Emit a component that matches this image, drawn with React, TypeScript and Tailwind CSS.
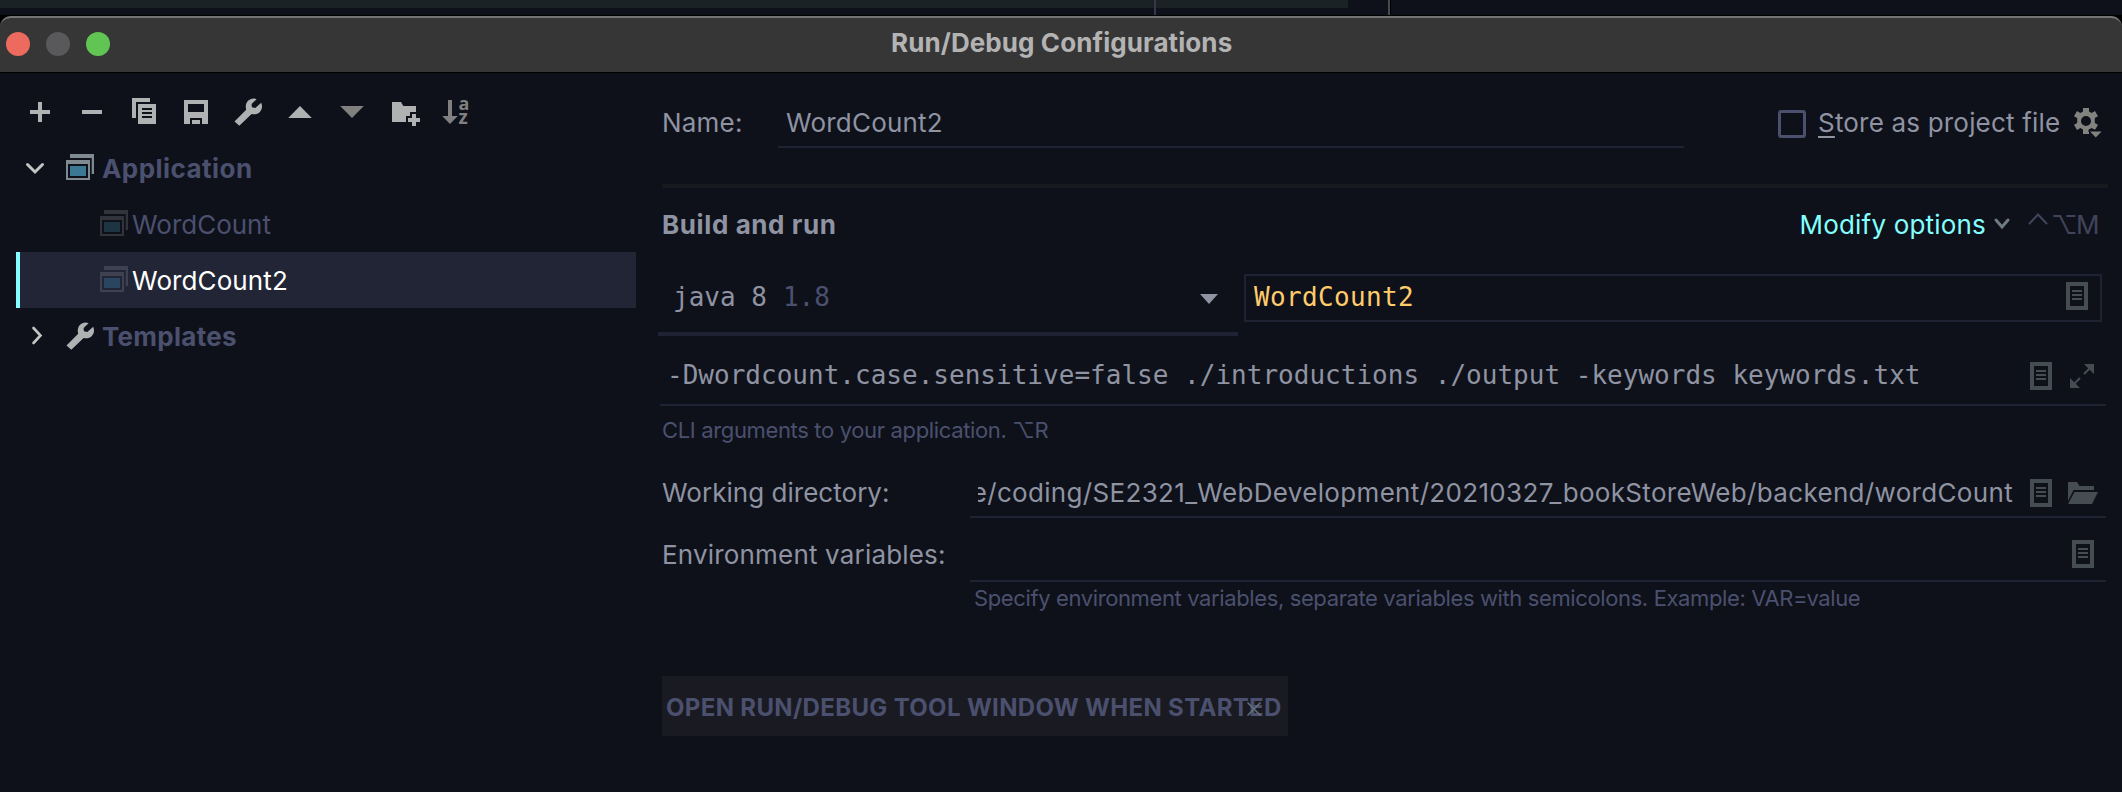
import type { ReactNode } from 'react'

function Svg({ children, className = 'size-8', box = '0 0 32 32' }: { children: ReactNode; className?: string; box?: string }) {
  return (
    <svg viewBox={box} className={`shrink-0 overflow-visible ${className}`} fill="currentColor" aria-hidden="true">
      {children}
    </svg>
  )
}

const PlusIcon = () => (
  <Svg><path d="M14 6h4v8h8v4h-8v8h-4v-8H6v-4h8z" /></Svg>
)
const MinusIcon = () => (
  <Svg><path d="M6 14h20v4H6z" /></Svg>
)
const CopyIcon = () => (
  <Svg>
    <path d="M4 2h18v4H8v16H4z" />
    <path fillRule="evenodd" d="M10 8h18v20H10zM14 12v2h10v-2zM14 16v2h10v-2zM14 20v2h10v-2z" />
  </Svg>
)
const SaveIcon = () => (
  <Svg>
    <path fillRule="evenodd" d="M4 4h24v24h-6v-6H10v6H4zM8 8v8h16V8z" />
    <path d="M12 24h8v4h-8z" />
  </Svg>
)
const WrenchIcon = () => (
  <Svg>
    <path d="M24.6 3.2 19.6 8l.3 3.3 3.4.6 5.9-5.2C30.800 10.500 30 14 27.600 16.200 25.400 18.300 22.600 18.700 19.600 17.900L7.300 29.800 2.500 25.500 14.200 13.700C13.200 10.400 13.900 7.300 15.800 5.100 18.200 2.400 21.600 1.900 24.600 3.200z" />
  </Svg>
)
const UpIcon = () => (
  <Svg><path d="M16 10 27.800 22H4.200z" /></Svg>
)
const DownIcon = () => (
  <Svg><path d="M4.200 10h23.600L16 22z" /></Svg>
)
const NewFolderIcon = () => (
  <Svg>
    <path d="M4 6h9l2.300 4H28v6h-6v4h-4v6H4z" />
    <path d="M24 18h4v4h4v4h-4v4h-4v-4h-4v-4h4z" />
  </Svg>
)
const SortIcon = () => (
  <Svg>
    <path d="M8 4h4v16h5.800L10 28 2.200 20H8z" />
    <text x="18.400" y="14" className="font-['Open_Sans'] text-[18px] font-bold">a</text>
    <text x="18.600" y="28" className="font-['Open_Sans'] text-[19px] font-bold">z</text>
  </Svg>
)

function AppIcon({ frame, fill }: { frame: string; fill: string }) {
  return (
    <Svg>
      <g className={frame}>
        <path d="M6 2h24v20h-2.300V6H6z" />
        <path fillRule="evenodd" d="M2 8h24v20H2zM4 12v14h20V12z" />
      </g>
      <path className={fill} d="M6 14h16v10H6z" />
    </Svg>
  )
}

const DocIcon = () => (
  <Svg className="h-7 w-[22px] text-[#454c52]" box="0 0 22 28">
    <path fillRule="evenodd" d="M0 0h22v28H0zM4 4v20h14V4z" />
    <path d="M6 8h10v2H6zM6 12h10v2H6zM6 16h10v2H6z" />
  </Svg>
)

const ExpandIcon = () => (
  <Svg className="size-6 text-[#454c52]" box="0 0 24 24">
    <path d="M14 0h10v10zM0 14v10h10z" />
    <path d="M20 4l-6 6M4 20l6-6" stroke="currentColor" strokeWidth="2" />
  </Svg>
)

const OpenFolderIcon = () => (
  <Svg className="h-[22px] w-[30px] text-[#454c52]" box="0 0 30 22">
    <path d="M0 0h9l2.500 4H26v4H5.500L0 19z" />
    <path d="M6.500 10H30l-6 12H0z" />
  </Svg>
)

const GearIcon = () => (
  <Svg className="h-[30px] w-[30px] text-[#82827f]" box="0 0 30 30">
    <path
      fillRule="evenodd"
      d="M10 0h6v3.600l2.600 1.400 3.400-1.900 3 5.100-3.200 1.900v4.800l3.200 1.900-3 5.100-3.400-1.900-2.600 1.400V26h-6v-4.600L7.400 20 4 21.900l-3-5.100 3.200-1.900v-4.800L1 8.200l3-5.100L7.400 5 10 3.600zM13 8a5 5 0 1 0 0 10 5 5 0 0 0 0-10z"
    />
    <path d="M15.500 21.500h14v2.500h-14z" className="fill-[#0e111a]" />
    <path d="M17 23.500h11.600L22.800 29.500z" />
  </Svg>
)

const tools = [
  { icon: <PlusIcon />, dim: false },
  { icon: <MinusIcon />, dim: false },
  { icon: <CopyIcon />, dim: false },
  { icon: <SaveIcon />, dim: false },
  { icon: <WrenchIcon />, dim: false },
  { icon: <UpIcon />, dim: false },
  { icon: <DownIcon />, dim: true },
  { icon: <NewFolderIcon />, dim: false },
  { icon: <SortIcon />, dim: true },
]

function Sidebar() {
  return (
    <aside className="w-[636px] shrink-0 pl-4">
      <div className="-ml-0.5 flex h-[67px] items-start pt-[23px]">
        {tools.map((t, i) => (
          <div key={i} className={`flex w-[52px] justify-center ${t.dim ? 'text-[#808080]' : 'text-[#afb1b3]'}`}>
            {t.icon}
          </div>
        ))}
      </div>
      <div className="text-[#4b506e]">
        <div className="flex h-14 items-center pl-[7px]">
          <Svg className="mr-[17px] size-6" box="0 0 24 24">
            <path d="M4.500 8.500 12 16l7.500-7.500" fill="none" className="stroke-[#c4c4c4]" strokeWidth="3" strokeLinecap="round" />
          </Svg>
          <AppIcon frame="fill-[#7f8b91]" fill="fill-[#3a7896]" />
          <span className="ml-1.5 font-bold tracking-[0.45px]">Application</span>
        </div>
        <div className="flex h-14 items-center pl-[82px]">
          <AppIcon frame="fill-[#31343b]" fill="fill-[#1e3443]" />
          <span className="ml-0.5">WordCount</span>
        </div>
        <div className="flex h-14 items-center border-l-4 border-[#84ffff] bg-[#222535] pl-[78px]">
          <AppIcon frame="fill-[#3d4150]" fill="fill-[#2a4560]" />
          <span className="ml-0.5 tracking-[0.1px] text-white">WordCount2</span>
        </div>
        <div className="flex h-14 items-center pl-[7px]">
          <Svg className="mr-[17px] size-6" box="0 0 24 24">
            <path d="M10.500 4 17.500 11.500l-7 7.500" fill="none" className="stroke-[#c4c4c4]" strokeWidth="2.600" strokeLinecap="round" />
          </Svg>
          <div className="text-[#afb1b3]"><WrenchIcon /></div>
          <span className="ml-1.5 font-bold tracking-[0.27px]">Templates</span>
        </div>
      </div>
    </aside>
  )
}

function Form() {
  return (
    <main className="flex w-[1486px] flex-col pl-[26px] text-[#8f93a2]">
      <div className="mt-6 flex h-[51px]">
        <div className="w-[116px] pt-0.5 leading-[47px] tracking-[0.2px]">Name:</div>
        <div className="w-[906px] border-b-2 border-[#1f2233] pt-0.5 pl-2 leading-[47px] tracking-[0.2px]">WordCount2</div>
        <div className="ml-[94px] flex items-center">
          <span className="mt-[3px] size-7 rounded-[3px] border-[3px] border-[#4b506e]" />
          <span className="ml-3 tracking-[0.19px]">
            <span className="underline decoration-2 underline-offset-[4px]">S</span>tore as project file
          </span>
          <span className="mt-px ml-[13px]"><GearIcon /></span>
        </div>
      </div>

      <div className="mt-9 h-1 w-[1446px] bg-[#17191e]" />

      <div className="flex h-[72px] w-[1436px] items-center">
        <h2 className="font-bold tracking-[0.6px]">Build and run</h2>
        <span className="ml-auto tracking-[0.18px] text-[#84ffff]">Modify options</span>
        <Svg className="ml-[7px] h-4 w-[18px]" box="0 0 18 16">
          <path d="M3 4l6 7 6-7" fill="none" className="stroke-[#6f7b80]" strokeWidth="3" strokeLinecap="round" />
        </Svg>
        <div className="ml-[17px] flex items-center gap-[3px] text-[#41445a]">
          <Svg className="-mt-[10px] h-3 w-5" box="0 0 20 12">
            <path d="M1.500 10.500 10 1.500l8.500 9" fill="none" stroke="currentColor" strokeWidth="2" strokeLinecap="round" />
          </Svg>
          <span className="tracking-[-1.5px]">⌥M</span>
        </div>
      </div>

      <div className="-ml-1 flex h-[76px] font-['DejaVu_Sans_Mono',monospace]">
        <div className="flex w-[580px] items-center border-b-4 border-[#1f2233] pt-0.5">
          <span className="ml-[15px]">java 8</span>
          <span className="ml-4 text-[#4b506e]">1.8</span>
          <Svg className="mt-[3px] mr-5 ml-auto h-[10px] w-[18px] text-[#8f93a2]" box="0 0 18 10">
            <path d="M0 0h18L9 10z" />
          </Svg>
        </div>
        <div className="mt-[14px] ml-1.5 flex h-12 w-[858px] items-center justify-between border-2 border-[#1f2233] pr-3 pl-2">
          <span className="-mt-0.5 tracking-[0.35px] text-[#ffcb6b]">WordCount2</span>
          <span className="-mt-1"><DocIcon /></span>
        </div>
      </div>

      <div className="-ml-0.5 flex h-[70px] w-[1446px] items-center border-b-2 border-[#1f2233] pt-[10px] pl-[7px] font-['DejaVu_Sans_Mono',monospace]">
        <span className="whitespace-nowrap tracking-[0.015px]">-Dwordcount.case.sensitive=false ./introductions ./output -keywords keywords.txt</span>
        <div className="mr-3 ml-auto flex items-center gap-[18px] pt-0.5">
          <DocIcon />
          <ExpandIcon />
        </div>
      </div>

      <div className="h-12 text-[22px] leading-[48px] tracking-[-0.35px] text-[#4b506e]">CLI arguments to your application. ⌥R</div>

      <div className="flex h-16">
        <div className="w-[308px] pt-[15px] leading-[47px] tracking-[0.03px]">Working directory:</div>
        <div className="flex w-[1136px] items-center border-b-2 border-[#1f2233] pt-[15px] pl-2">
          <div className="flex w-[1035px] justify-end overflow-hidden">
            <span className="whitespace-nowrap tracking-[0.33px]">e/coding/SE2321_WebDevelopment/20210327_bookStoreWeb/backend/wordCount</span>
          </div>
          <div className="ml-[17px] flex items-center gap-4">
            <DocIcon />
            <OpenFolderIcon />
          </div>
        </div>
      </div>

      <div className="flex h-16">
        <div className="w-[308px] pt-[12px] leading-[50px] tracking-[0.18px]">Environment variables:</div>
        <div className="flex w-[1136px] items-center justify-end border-b-2 border-[#1f2233] pt-[10px] pr-3">
          <DocIcon />
        </div>
      </div>

      <div className="h-8 pl-[312px] text-[22px] leading-8 tracking-[-0.38px] whitespace-nowrap text-[#4b506e]">
        Specify environment variables, separate variables with semicolons. Example: VAR=value
      </div>

      <div className="relative mt-[62px] flex h-[60px] w-[626px] items-center bg-[#1a1a22] pt-[3px] pl-1 text-2xl font-bold tracking-[0.34px] whitespace-nowrap text-[#4b506e]">
        OPEN RUN/DEBUG TOOL WINDOW WHEN STARTED
        <Svg className="absolute top-[25px] left-[584px] size-4" box="0 0 16 16">
          <path d="M1.500 1.500l13 13M14.500 1.500l-13 13" className="stroke-[#64707a]" strokeWidth="1.500" />
        </Svg>
      </div>
    </main>
  )
}

export default function App() {
  return (
    <div className="flex h-[792px] w-[2122px] flex-col overflow-hidden bg-[#0e111a] font-['Inter',sans-serif] text-[26px]">
      <div className="flex h-[15px] shrink-0">
        <div className="h-2 w-[1154px] bg-[#1b2225]" />
        <div className="w-0.5 bg-[#35374b]" />
        <div className="h-2 w-[192px] bg-[#1b2225]" />
        <div className="ml-10 w-[3px] border-r border-black bg-[#4a4b50]" />
      </div>
      <div className="shrink-0 bg-black pt-px">
        <header className="flex h-14 rounded-t-[11px] border-t-2 border-[#757575] bg-[#363637]">
          <div className="flex w-[636px] gap-4 pt-[14px] pl-1.5">
            <span className="size-6 rounded-full bg-[#ed6a5e]" />
            <span className="size-6 rounded-full bg-[#59595b]" />
            <span className="size-6 rounded-full bg-[#61c554]" />
          </div>
          <h1 className="pt-[9px] pl-[255px] leading-[32px] font-bold tracking-[0.09px] text-[#b3b3b3]">Run/Debug Configurations</h1>
        </header>
        <div className="h-px" />
      </div>
      <div className="flex grow">
        <Sidebar />
        <Form />
      </div>
    </div>
  )
}
